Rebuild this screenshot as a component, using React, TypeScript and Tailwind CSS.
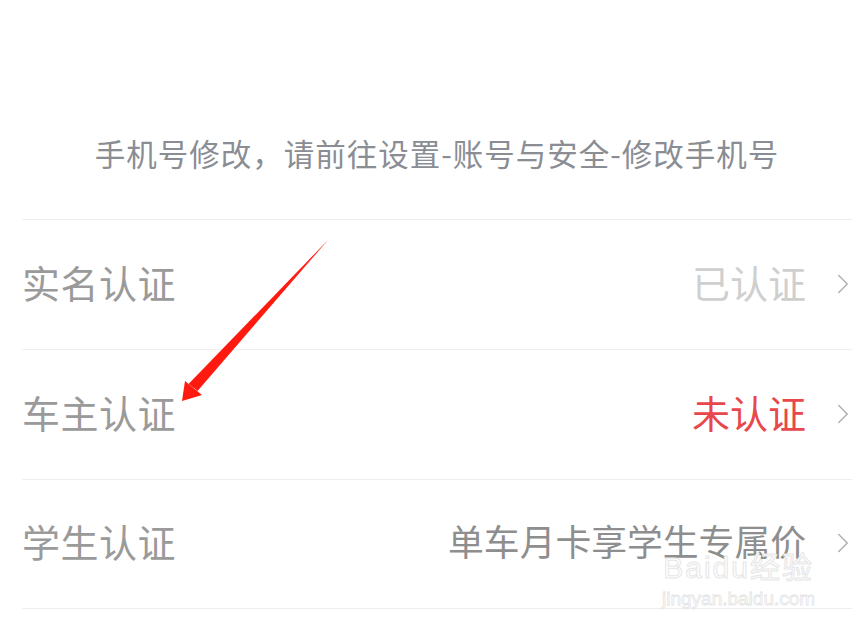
import { ChevronRight } from 'lucide-react';

const rows = [
  { label: '实名认证', value: '已认证', tone: 'text-[#cfcfcf]', size: 'text-[38px]' },
  { label: '车主认证', value: '未认证', tone: 'text-[#e8474c]', size: 'text-[38px]' },
  { label: '学生认证', value: '单车月卡享学生专属价', tone: 'text-[#8e8e8e]', size: 'text-[35.8px]' },
];

const cjk = "font-['Noto_Sans_CJK_SC','Noto_Sans',sans-serif]";

const App = () => {
  return (
    <div className={`relative w-[866px] h-[628px] overflow-hidden bg-white ${cjk}`}>
      {/* hint */}
      <div className="h-[219px] flex items-center justify-center pt-[88px]">
        <p className="text-[30.5px] leading-none text-[#8a8d93] tracking-[1px] ml-[8px]">
          手机号修改，请前往设置-账号与安全-修改手机号
        </p>
      </div>

      <div className="pl-[22px] pr-[6px]">
        {rows.map((row) => (
          <div
            key={row.label}
            className="h-[130px] flex items-center pb-[6px] mr-[8px] border-t border-[#efefef] last:border-b"
          >
            <span className="text-[38px] leading-none text-[#9a9a9a] tracking-[0.5px]">{row.label}</span>
            <span className={`ml-auto ${row.size} leading-none ${row.tone}`}>{row.value}</span>
            <ChevronRight className="ml-[20px] -mr-[8px] mt-[4px] w-[34px] h-[34px] text-[#b0b0b0]" strokeWidth={1.05} />
          </div>
        ))}
      </div>

      {/* watermark */}
      <div className="absolute left-[662px] top-[550px] flex flex-col items-center pointer-events-none select-none">
        <span className="text-[30px] leading-none text-white font-['Liberation_Sans',sans-serif] [-webkit-text-stroke:1px_#e6e6e6] tracking-[2px]">
          Baidu<span className={`${cjk}`}>经验</span>
        </span>
        <span className="mt-[6px] text-[19px] leading-none text-white font-['Liberation_Sans',sans-serif] [-webkit-text-stroke:0.8px_#e4e4e4]">
          jingyan.baidu.com
        </span>
      </div>

      {/* red annotation arrow */}
      <svg className="absolute left-0 top-0 pointer-events-none" width="866" height="628" viewBox="0 0 866 628">
        <path d="M328 240 L194 388 L188.5 384 Z" fill="#ff1a10" />
        <path d="M328 240 L197.5 391 L192.5 386.5 Z" fill="#ff1a10" />
        <path d="M182 401 L185 381 L202 395 Z" fill="#ff1a10" />
      </svg>
    </div>
  );
};

export default App;
